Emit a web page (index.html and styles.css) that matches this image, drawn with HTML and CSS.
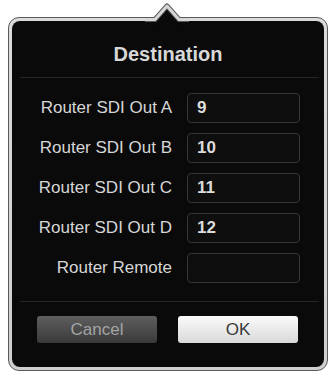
FILE: index.html
```html
<!DOCTYPE html>
<html>
<head>
<meta charset="utf-8">
<link rel="stylesheet" href="styles.css">
</head>
<body>
<div class="popover">
  <svg class="arrow" width="44" height="22" viewBox="0 0 44 22">
    <polygon points="8,22 22,5 36,22" fill="#0a0a0a"/>
    <path d="M0,16.5 L10,16.5 L22,3 L34,16.5 L44,16.5" fill="none" stroke="#5a5a5a" stroke-width="5" stroke-linejoin="round"/>
    <path d="M0,16.5 L10,16.5 L22,3 L34,16.5 L44,16.5" fill="none" stroke="#d6d6d6" stroke-width="3" stroke-linejoin="round"/>
    <polygon points="11,19.5 22,7 33,19.5 33,22 11,22" fill="#0a0a0a"/>
  </svg>
  <div class="frame">
    <div class="panel">
      <div class="title">Destination</div>
      <div class="sep"></div>
      <div class="rows">
        <div class="label">Router SDI Out A</div><div class="field">9</div>
        <div class="label">Router SDI Out B</div><div class="field">10</div>
        <div class="label">Router SDI Out C</div><div class="field">11</div>
        <div class="label">Router SDI Out D</div><div class="field">12</div>
        <div class="label">Router Remote</div><div class="field"></div>
      </div>
      <div class="sep sep2"></div>
      <div class="buttons">
        <div class="btn cancel">Cancel</div>
        <div class="btn ok">OK</div>
      </div>
    </div>
  </div>
</div>
</body>
</html>
```

FILE: styles.css
```css
html, body {
  margin: 0;
  padding: 0;
  background: #ffffff;
}
body {
  font-family: "Liberation Sans", Arial, sans-serif;
}
.popover {
  position: relative;
  width: 320px;
  margin-left: 8px;
  padding-top: 17px;
}
.arrow {
  position: absolute;
  left: 137px;
  top: 3px;
  z-index: 2;
}
.frame {
  border: 1px solid #5a5a5a;
  border-radius: 11px;
  padding: 3px;
  background: linear-gradient(#dcdcdc, #cfcfcf);
}
.panel {
  background: #0a0a0a;
  border-radius: 8px;
  height: 346px;
  box-sizing: border-box;
  padding-top: 1px;
}
.title {
  height: 46px;
  padding-top: 9px;
  line-height: 46px;
  text-align: center;
  color: #d8d8d8;
  font-weight: bold;
  font-size: 20px;
}
.sep {
  height: 1px;
  background: #262626;
  margin: 0 5px 0 8px;
}
.rows {
  display: grid;
  grid-template-columns: 160px 113px;
  column-gap: 15px;
  row-gap: 10px;
  margin-top: 15px;
}
.label {
  height: 30px;
  line-height: 30px;
  text-align: right;
  color: #d6d6d6;
  font-size: 17px;
  white-space: nowrap;
}
.field {
  height: 30px;
  box-sizing: border-box;
  border: 1.5px solid #363636;
  border-radius: 4px;
  background: #0e0e0e;
  color: #dcdcdc;
  font-weight: bold;
  font-size: 17px;
  line-height: 27px;
  padding-left: 9px;
}
.sep2 {
  margin-top: 18px;
}
.buttons {
  display: flex;
  gap: 21px;
  margin-top: 14px;
  padding-left: 25px;
}
.btn {
  width: 120px;
  height: 27px;
  border-radius: 3px;
  text-align: center;
  line-height: 27px;
  font-size: 17px;
}
.cancel {
  background: linear-gradient(#5e5e5e, #3a3a3a);
  color: #a4a4a4;
}
.ok {
  background: linear-gradient(#fbfbfb, #d9d9d9);
  color: #3a3a3a;
}
```
